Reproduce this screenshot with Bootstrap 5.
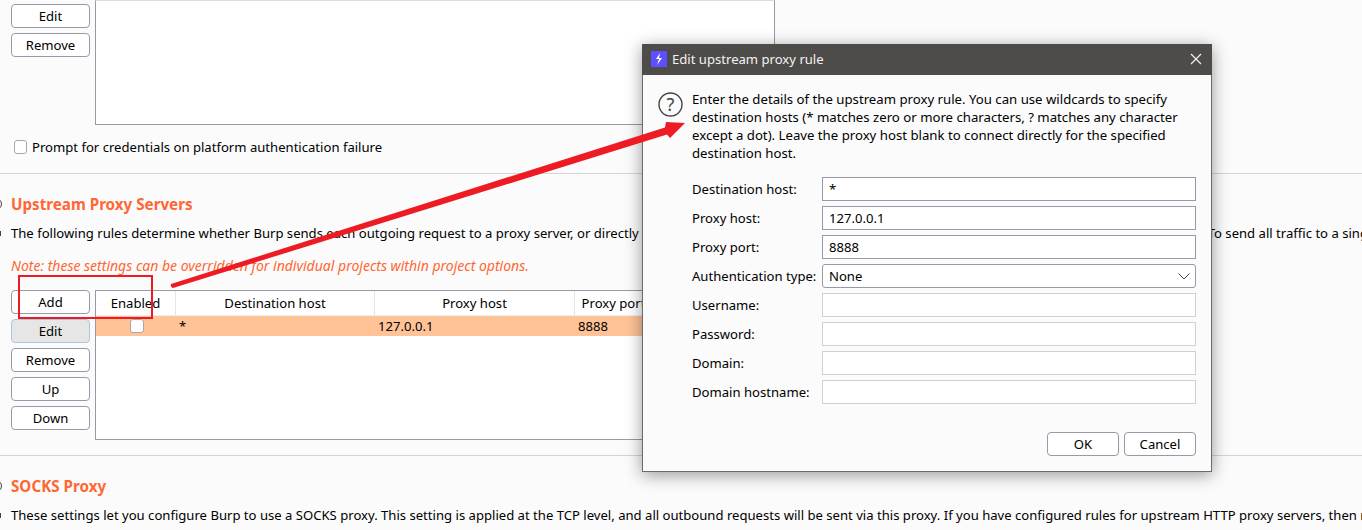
<!DOCTYPE html>
<html lang="en">
<head>
    <meta charset="UTF-8">
    <title>Burp upstream proxy rule</title>
    <link href="https://cdn.jsdelivr.net/npm/bootstrap@5.3.0/dist/css/bootstrap.min.css" rel="stylesheet">
    <style>
        html, body { height: 530px; overflow: hidden; }
        body { background: #fbfbfb; color: #000; font-family: "Noto Sans", sans-serif; font-size: 13.1px; line-height: 18px; }
        .page { width: 1362px; height: 530px; overflow: hidden; }
        .top-sect { height: 174px; border-bottom: 1px solid #d4d4d4; padding: 4px 0 0 11px; }
        .mid-sect { height: 282px; border-bottom: 1px solid #d4d4d4; padding: 20px 0 0 11px; }
        .end-sect { padding: 20px 0 0 11px; white-space: nowrap; }
        .burp-btn { display: block; width: 79px; height: 24px; padding: 0; font-size: 13.1px; line-height: 22px; color: #000; background: #fff; border: 1px solid #9a98a8; border-radius: 4px; }
        .burp-btn.sel { background: #e6e6e6; border-color: #a9c8e4; }
        .btn-col { width: 84px; flex: none; gap: 5px; }
        .box-top { width: 680px; height: 125px; margin-top: -4px; background: #fff; border: 1px solid #9a98a8; border-top-color: #ddd; }
        .burp-check { width: 13px; height: 14px; margin: 0; flex: none; border: 1px solid #a8a8a8; border-radius: 3px; background: #fff; }
        .prompt { margin-top: 13px; margin-left: 3px; gap: 5px; }
        .sect-title { position: relative; font-size: 15.2px; line-height: 20px; font-weight: 700; color: #ff6633; margin: 0; }
        .sect-title::before { content: ""; position: absolute; left: -21px; top: 4px; width: 12px; height: 12px; border: 1px solid #444; border-radius: 50%; }
        .desc { position: relative; margin-top: 10px; white-space: nowrap; }
        .desc::before { content: ""; position: absolute; left: -11px; top: 7px; width: 1px; height: 5px; background: #444; }
        .note { margin-top: 15px; font-size: 14px; font-style: italic; color: #ff6633; white-space: nowrap; }
        .rule-row { margin-top: 15px; }
        .rule-table { width: 680px; height: 150px; background: #fff; border: 1px solid #9a98a8; }
        .th-row { height: 25px; border-bottom: 1px solid #eee; }
        .th-cell { text-align: center; line-height: 25px; border-right: 1px solid #e6e6e6; flex: none; }
        .w1 { width: 80px; }
        .w2 { width: 199px; }
        .w3 { width: 200px; }
        .w4 { width: 78px; }
        .sel-row { height: 20px; background: #ffc397; line-height: 20px; }
        .sel-row > div { flex: none; padding-left: 3px; }
        .sel-row .burp-check { width: 14px; margin-right: 2px; }
        .dlg { position: absolute; left: 642px; top: 44px; width: 570px; height: 428px; background: #fbfbfb; border: 1px solid #6b6b6b; border-top: 0; box-shadow: 0 3px 16px rgba(0, 0, 0, .4); }
        .dlg-head { height: 31px; margin: 0 -1px; padding: 0 10px 1px 9px; background: #4e4c49; color: #f2f2f2; gap: 5px; }
        .dlg-body { padding: 15px 15px 0 15px; }
        .intro { gap: 9px; }
        .intro p { margin: 0; width: 490px; font-size: 13.2px; }
        .help-icon { flex: none; margin-top: 2px; }
        .field-list { margin-top: 15px; }
        .field-row { height: 24px; margin-bottom: 5px; }
        .field-label { flex: none; width: 130px; padding-left: 34px; box-sizing: content-box; white-space: nowrap; }
        .field-box { width: 374px; height: 24px; padding: 0 6px; font-size: 13.1px; line-height: 22px; color: #000; background-color: #fff; border: 1px solid #9a98a8; border-radius: 0; }
        .field-box:disabled { background: #fff; border-color: #d0d0d0; }
        .field-box.form-select { padding: 0 6px; border-radius: 3px; background-image: url("data:image/svg+xml,%3csvg xmlns='http://www.w3.org/2000/svg' viewBox='0 0 12 7'%3e%3cpath fill='none' stroke='%23444' stroke-width='1' d='M.5.5l5.5 5.5L11.5.5'/%3e%3c/svg%3e"); background-position: right 5px center; background-size: 12px 7px; }
        .dlg-foot { position: absolute; right: 15px; bottom: 15px; gap: 5px; }
        .dlg-foot .burp-btn { width: 72px; }
        .arrow { position: absolute; left: 0; top: 0; pointer-events: none; }
        .red-box { position: absolute; left: 18px; top: 275px; width: 135px; height: 44px; border: 2px solid #ed1c24; }
    </style>
</head>
<body>
    <div class="page">
        <div class="top-sect">
            <div class="d-flex">
                <div class="btn-col d-flex flex-column">
                    <button class="burp-btn">Edit</button>
                    <button class="burp-btn">Remove</button>
                </div>
                <div class="box-top"></div>
            </div>
            <div class="prompt d-flex align-items-center">
                <span class="burp-check"></span>
                <span>Prompt for credentials on platform authentication failure</span>
            </div>
        </div>
        <div class="mid-sect">
            <h5 class="sect-title">Upstream Proxy Servers</h5>
            <div class="desc">The following rules determine whether Burp sends each outgoing request to a proxy server, or directly to the destination web server. The first rule that matches each destination host will be used. To send all traffic to a single proxy server, create a rule with wildcard host.</div>
            <div class="note">Note: these settings can be overridden for individual projects within project options.</div>
            <div class="rule-row d-flex">
                <div class="btn-col d-flex flex-column">
                    <button class="burp-btn">Add</button>
                    <button class="burp-btn sel">Edit</button>
                    <button class="burp-btn">Remove</button>
                    <button class="burp-btn">Up</button>
                    <button class="burp-btn">Down</button>
                </div>
                <div class="rule-table">
                    <div class="th-row d-flex">
                        <div class="th-cell w1">Enabled</div>
                        <div class="th-cell w2">Destination host</div>
                        <div class="th-cell w3">Proxy host</div>
                        <div class="th-cell w4">Proxy port</div>
                    </div>
                    <div class="sel-row d-flex">
                        <div class="w1 d-flex align-items-center justify-content-center"><span class="burp-check"></span></div>
                        <div class="w2">*</div>
                        <div class="w3">127.0.0.1</div>
                        <div class="w4">8888</div>
                    </div>
                </div>
            </div>
        </div>
        <div class="end-sect">
            <h5 class="sect-title">SOCKS Proxy</h5>
            <div class="desc">These settings let you configure Burp to use a SOCKS proxy. This setting is applied at the TCP level, and all outbound requests will be sent via this proxy. If you have configured rules for upstream HTTP proxy servers, then requests to upstream proxies will be sent via SOCKS.</div>
        </div>
    </div>

    <div class="red-box"></div>

    <div class="dlg">
        <div class="dlg-head d-flex align-items-center">
            <svg width="16" height="16" viewBox="0 0 16 16"><rect width="16" height="16" fill="#5c4fff"/><path d="M9 2 L5 8 H8 L6 14 L11 7 H8 Z" fill="#fff"/></svg>
            <span class="flex-grow-1">Edit upstream proxy rule</span>
            <svg width="12" height="12" viewBox="0 0 12 12"><path d="M1 1 L11 11 M11 1 L1 11" stroke="#eee" stroke-width="1.3"/></svg>
        </div>
        <div class="dlg-body">
            <div class="intro d-flex">
                <svg class="help-icon" width="25" height="25" viewBox="0 0 25 25"><circle cx="12.5" cy="12.5" r="11.5" fill="none" stroke="#444" stroke-width="1.4"/><text x="12.5" y="19" text-anchor="middle" font-family="Noto Sans" font-size="18" fill="#444">?</text></svg>
                <p>Enter the details of the upstream proxy rule. You can use wildcards to specify destination hosts (* matches zero or more characters, ? matches any character except a dot). Leave the proxy host blank to connect directly for the specified destination host.</p>
            </div>
            <div class="field-list">
                <div class="field-row d-flex align-items-center"><label class="field-label">Destination host:</label><input class="field-box" value="*"></div>
                <div class="field-row d-flex align-items-center"><label class="field-label">Proxy host:</label><input class="field-box" value="127.0.0.1"></div>
                <div class="field-row d-flex align-items-center"><label class="field-label">Proxy port:</label><input class="field-box" value="8888"></div>
                <div class="field-row d-flex align-items-center"><label class="field-label">Authentication type:</label><select class="form-select field-box"><option>None</option></select></div>
                <div class="field-row d-flex align-items-center"><label class="field-label">Username:</label><input class="field-box" disabled></div>
                <div class="field-row d-flex align-items-center"><label class="field-label">Password:</label><input class="field-box" disabled></div>
                <div class="field-row d-flex align-items-center"><label class="field-label">Domain:</label><input class="field-box" disabled></div>
                <div class="field-row d-flex align-items-center"><label class="field-label">Domain hostname:</label><input class="field-box" disabled></div>
            </div>
        </div>
        <div class="dlg-foot d-flex">
            <button class="burp-btn">OK</button>
            <button class="burp-btn">Cancel</button>
        </div>
    </div>

    <svg class="arrow" width="700" height="320" viewBox="0 0 700 320">
        <path d="M171 284 Q170 287 173 288 L667 134.5 L670 138 L685 123 L666 122 L665 127.5 Z" fill="#ed1c24"/>
    </svg>

    <script src="https://cdn.jsdelivr.net/npm/bootstrap@5.3.0/dist/js/bootstrap.bundle.min.js"></script>
</body>
</html>
